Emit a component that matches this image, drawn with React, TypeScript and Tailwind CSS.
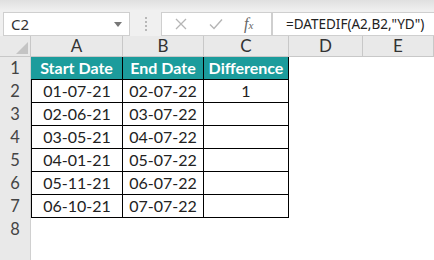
import React from 'react';

const rows = [
  { start: '01-07-21', end: '02-07-22', diff: '1' },
  { start: '02-06-21', end: '03-07-22', diff: '' },
  { start: '03-05-21', end: '04-07-22', diff: '' },
  { start: '04-01-21', end: '05-07-22', diff: '' },
  { start: '05-11-21', end: '06-07-22', diff: '' },
  { start: '06-10-21', end: '07-07-22', diff: '' },
];

const cols = ['A', 'B', 'C', 'D', 'E'];

const sheetFont = { fontFamily: 'Lato, "Liberation Sans", sans-serif' };
const uiFont = { fontFamily: '"Noto Sans", "Liberation Sans", sans-serif' };

const RowNum: React.FC<{ n?: number }> = ({ n }) => (
  <div className="h-[23px] bg-[#e9e9e9] border-r border-[#d0d0d0] flex items-center justify-center text-[16.5px] text-[#444]">
    {n}
  </div>
);

const App: React.FC = () => {
  return (
    <div className="w-[434px] h-[260px] overflow-hidden bg-white flex flex-col">
      {/* formula bar */}
      <div className="h-[48px] bg-[#f0f0f0] flex flex-col" style={uiFont}>
        <div className="h-[10px] bg-gradient-to-b from-[#e0e0e0] to-[#efefef]" />
        <div className="flex items-start pt-[2px] pl-[3px]">
          <div className="w-[127px] h-[24px] bg-white border border-[#cfcfcf] flex items-center justify-between pl-[7px] pr-[7px] text-[15px] text-[#333]">
            <span>C2</span>
            <svg width="8" height="5" viewBox="0 0 8 5">
              <path d="M0 0 L8 0 L4 5 Z" fill="#777" />
            </svg>
          </div>
          <div className="w-[31px] h-[24px] flex flex-col items-center justify-center gap-[2px]">
            <span className="w-[2px] h-[2px] bg-[#b8b8b8]" />
            <span className="w-[2px] h-[2px] bg-[#b8b8b8]" />
            <span className="w-[2px] h-[2px] bg-[#b8b8b8]" />
            <span className="w-[2px] h-[2px] bg-[#b8b8b8]" />
          </div>
          <div className="w-[111px] h-[24px] bg-white border border-[#cfcfcf] flex items-center">
            <svg width="12" height="12" viewBox="0 0 12 12" className="ml-[13px]">
              <path d="M1 1 L11 11 M11 1 L1 11" stroke="#b5b5b5" strokeWidth="1.3" />
            </svg>
            <svg width="14" height="12" viewBox="0 0 14 12" className="ml-[22px]">
              <path d="M1 6.5 L5 10.5 L13 1.5" stroke="#b5b5b5" strokeWidth="1.4" fill="none" />
            </svg>
            <span
              className="ml-[21px] text-[16px] italic text-[#666]"
              style={{ fontFamily: '"Liberation Serif", serif' }}
            >
              f<span className="text-[11px]">x</span>
            </span>
          </div>
          <div className="flex-1 h-[24px] bg-white border border-r-0 border-[#cfcfcf] flex items-center pl-[13px] text-[13.5px] text-[#222]">
            =DATEDIF(A2,B2,"YD")
          </div>
        </div>
      </div>

      {/* sheet */}
      <div className="grid grid-cols-[31px_92px_81px_85px_74px_71px]" style={sheetFont}>
        <div className="h-[21px] bg-[#e9e9e9] border-r border-b border-[#c8c8c8] flex items-end justify-end pr-[2px] pb-[2px]">
          <svg width="12" height="12" viewBox="0 0 12 12">
            <path d="M12 0 L12 12 L0 12 Z" fill="#c4c4c4" />
          </svg>
        </div>
        {cols.map((c) => (
          <div
            key={c}
            className="h-[21px] bg-[#e9e9e9] border-r border-b border-[#c8c8c8] flex items-center justify-center text-[17px] text-[#333]"
          >
            {c}
          </div>
        ))}

        <RowNum n={1} />
        {['Start Date', 'End Date', 'Difference'].map((h) => (
          <div
            key={h}
            className="h-[23px] bg-[#1c9c9c] border-r border-b border-black flex items-center justify-center text-[16px] font-bold text-white"
          >
            {h}
          </div>
        ))}
        <div className="h-[23px]" />
        <div className="h-[23px]" />

        {rows.map((r, i) => (
          <React.Fragment key={i}>
            <RowNum n={i + 2} />
            <div className="h-[23px] border-l border-r border-b border-black flex items-center justify-center text-[16px] text-[#222]">
              {r.start}
            </div>
            <div className="h-[23px] border-r border-b border-black flex items-center justify-center text-[16px] text-[#222]">
              {r.end}
            </div>
            <div className="h-[23px] border-r border-b border-black flex items-center justify-center text-[16px] text-[#222]">
              {r.diff}
            </div>
            <div className="h-[23px]" />
            <div className="h-[23px]" />
          </React.Fragment>
        ))}

        <RowNum n={8} />
        <div className="col-span-5 h-[23px]" />
        <RowNum />
        <div className="col-span-5 h-[23px]" />
      </div>
    </div>
  );
};

export default App;
